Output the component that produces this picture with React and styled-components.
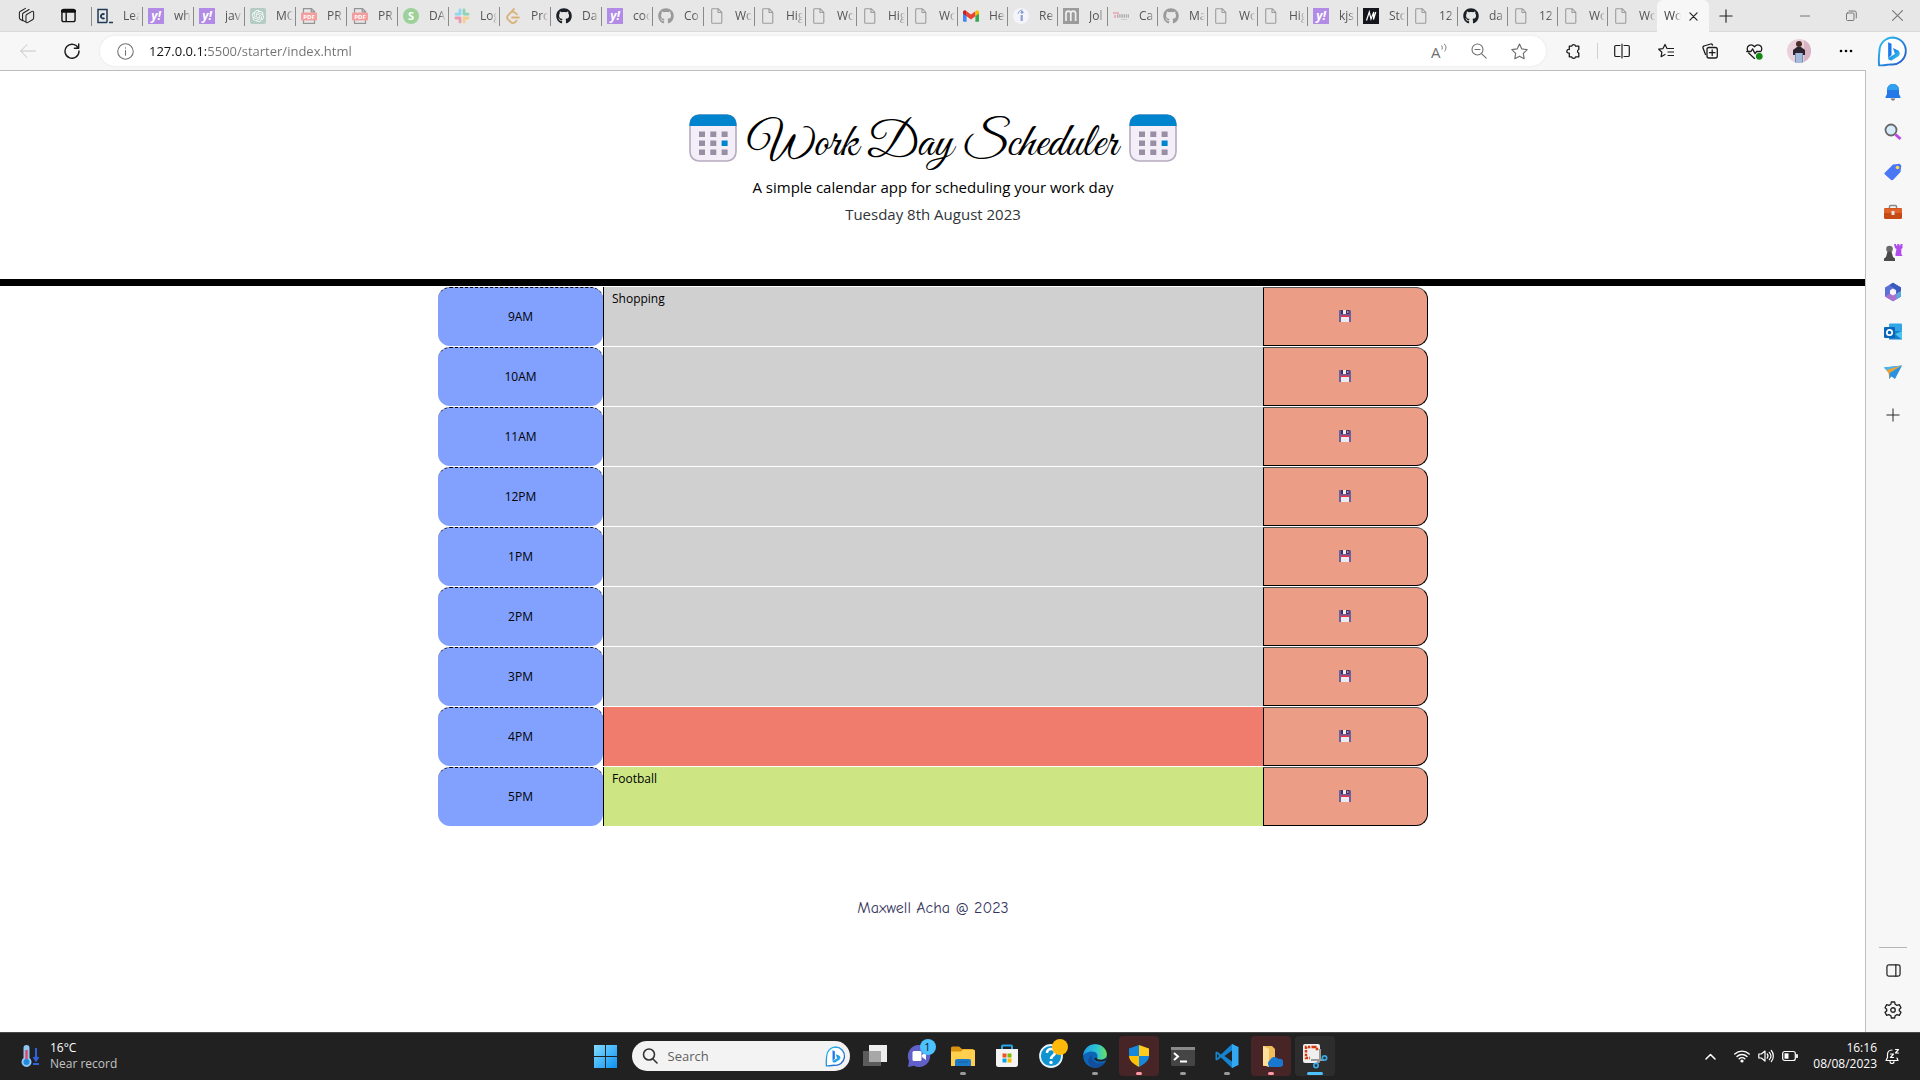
import React from "react";
import styled, { createGlobalStyle, css } from "styled-components";
import { FaGithub } from "react-icons/fa";
import { SiOpenai, SiLeetcode } from "react-icons/si";

const ui = `"Open Sans", "Noto Sans", sans-serif`;

const GlobalStyle = createGlobalStyle`
  * { box-sizing: border-box; }
  body { margin: 0; background: #fff; font-family: ${ui}; overflow: hidden; }
  button, input, textarea { font: inherit; color: inherit; margin: 0; }
  svg { display: block; flex: none; }
`;

const Screen = styled.div`
  display: flex;
  flex-direction: column;
  height: 100vh;
`;

const bare = css`
  display: flex;
  align-items: center;
  justify-content: center;
  border: 0;
  padding: 0;
  background: none;
`;

/* ---------- tab strip ---------- */

const TabStrip = styled.div`
  display: flex;
  align-items: stretch;
  height: 32px;
  flex: none;
  background: #e7e7e7;
  border-bottom: 1px solid #d9d9d9;
`;

const StripButton = styled.button`
  ${bare}
  width: ${(p) => p.$w || 42}px;
  color: ${(p) => p.$color || "#222"};
`;

const StripLead = styled.div`
  display: flex;
  padding-left: 5px;
  width: 91px;
`;

const Tab = styled.button`
  display: flex;
  align-items: center;
  gap: 10px;
  width: ${(p) => (p.$wide ? 51 : 50)}px;
  padding: 0 2px 0 6px;
  border: 0;
  background: linear-gradient(#8a8a8a, #8a8a8a) 0 7px / 1px 19px no-repeat;
  color: #555;
  font-size: 12px;
  line-height: 16px;
`;

const TabTitle = styled.span`
  flex: 1;
  min-width: 0;
  overflow: hidden;
  white-space: nowrap;
  text-align: left;
  mask-image: linear-gradient(90deg, #000 60%, transparent);
`;

const ActiveTab = styled.div`
  display: flex;
  align-items: center;
  gap: 4px;
  width: 52px;
  height: 32px;
  padding-left: 7px;
  border-radius: 6px 6px 0 0;
  background: #f7f7f7;
  color: #444;
  font-size: 12px;
  line-height: 16px;
`;

const ActiveTitle = styled(TabTitle)`
  flex: none;
  width: 17px;
`;

const WindowControls = styled.div`
  display: flex;
  margin-left: auto;
`;

const Square = styled.span`
  display: flex;
  flex: none;
  align-items: center;
  justify-content: center;
  width: 16px;
  height: 16px;
  border-radius: ${(p) => p.$r || 0}px;
  background: ${(p) => p.$bg};
  color: ${(p) => p.$fg || "#fff"};
  font-size: ${(p) => p.$fs || 11}px;
  line-height: 16px;
  font-weight: 700;
  font-style: ${(p) => (p.$it ? "italic" : "normal")};
`;

/* ---------- toolbar ---------- */

const Toolbar = styled.div`
  display: flex;
  align-items: center;
  height: 38px;
  flex: none;
  padding: 0 6px;
  background: #f7f7f7;
`;

const ToolButton = styled.button`
  ${bare}
  width: ${(p) => p.$w || 44}px;
  height: 32px;
  flex: none;
  color: ${(p) => p.$color || "#1b1b1b"};
`;

const AddressBar = styled.label`
  display: flex;
  flex: 1;
  align-items: center;
  height: 30px;
  margin: 0 5px 0 6px;
  padding: 0 7px 0 17px;
  border-radius: 15px;
  background: #fff;
  box-shadow: 0 0 3px #e4e4e4;
  color: #717171;
`;

const AddressInput = styled.input`
  flex: 1;
  min-width: 0;
  height: 24px;
  margin-left: 15px;
  padding: 0;
  border: 0;
  outline: 0;
  font-size: 13px;
  color: #6b6b6b;
  background: linear-gradient(90deg, #111 57px, #717171 57px);
  background-clip: text;
  -webkit-text-fill-color: transparent;
`;

const ToolDivider = styled.span`
  width: 1px;
  height: 16px;
  margin: 0 2px;
  background: #cfcfcf;
`;

/* ---------- body ---------- */

const Body = styled.div`
  display: flex;
  flex: 1;
  min-height: 0;
`;

const Page = styled.main`
  flex: 1;
  min-width: 0;
  border-top: 1px solid #bdbdbd;
  background: #fff;
`;

const Header = styled.header`
  display: flex;
  flex-direction: column;
  align-items: center;
  padding: 43px 0 53px;
  border-bottom: 7px solid #000;
  text-align: center;
`;

const Title = styled.h1`
  display: flex;
  align-items: flex-start;
  gap: 11px;
  margin: 0 0 1px;
  font-family: "Great Vibes", "Liberation Serif", cursive;
  font-weight: 400;
  font-size: 48px;
  line-height: 60px;
  color: #000;
`;

const Lead = styled.p`
  margin: 0;
  font-size: 15px;
  line-height: 24px;
  color: #000;
`;

const Today = styled.p`
  margin: 3px 0 0;
  font-size: 15px;
  line-height: 24px;
  color: #2f3437;
`;

const Planner = styled.div`
  width: 100%;
  max-width: 990px;
  margin: 0 auto;
`;

const slotColors = { past: "#d0d0d0", present: "#f07c6e", future: "#cde683" };

const Slot = styled.div`
  display: grid;
  grid-template-columns: 1fr 4fr 1fr;
  height: 59px;
  margin-top: 1px;
  font-size: 12px;
  color: #000;
`;

const Hour = styled.label`
  display: flex;
  align-items: center;
  justify-content: center;
  padding-bottom: 2px;
  border-top: 1px dashed #000;
  border-radius: 12px;
  background: #82a1ff;
`;

const Task = styled.textarea`
  display: block;
  width: 100%;
  height: 59px;
  padding: 3px 8px;
  border: 0;
  border-left: 1px solid #000;
  border-radius: 0;
  outline: 0;
  resize: none;
  line-height: 18px;
  background: ${(p) => slotColors[p.$when]};
`;

const Save = styled.button`
  ${bare}
  padding: 0 2px 2px 0;
  border: 1px solid #000;
  border-top-color: #555;
  border-radius: 0 12px 12px 0;
  background: #eb9d86;
`;

const Footer = styled.footer`
  padding-top: 70px;
  font-family: "Comic Sans MS", "Comic Neue", "Patrick Hand", Lato, ${ui};
  font-size: 16px;
  line-height: 24px;
  text-align: center;
  color: #35355c;
`;

/* ---------- sidebar ---------- */

const Sidebar = styled.aside`
  position: relative;
  display: flex;
  flex-direction: column;
  align-items: center;
  width: 54px;
  flex: none;
  padding: 2px 0;
  background: #f7f7f7;
  box-shadow: -1px 0 0 #bdbdbd;
`;

const SideButton = styled.button`
  ${bare}
  width: 40px;
  height: ${(p) => p.$h || 40}px;
  color: #222;
`;

const SideLine = styled.span`
  width: 28px;
  height: 1px;
  margin-top: auto;
  margin-bottom: 2px;
  background: #b5b5b5;
`;

/* ---------- taskbar ---------- */

const Taskbar = styled.nav`
  display: grid;
  grid-template-columns: 1fr auto 1fr;
  align-items: center;
  height: 48px;
  flex: none;
  padding-bottom: 1px;
  border-top: 1px solid #484848;
  background: #212121;
  color: #fff;
  font-size: 12px;
  line-height: 16px;
`;

const Weather = styled.button`
  ${bare}
  justify-self: start;
  gap: 8px;
  padding-left: 20px;
  text-align: left;
`;

const Muted = styled.span`
  color: #c4c4c4;
`;

const Stack = styled.span`
  display: flex;
  flex-direction: column;
`;

const Dock = styled.div`
  display: flex;
  align-items: center;
  gap: 4px;
`;

const SearchBox = styled.label`
  display: flex;
  align-items: center;
  width: 218px;
  height: 30px;
  margin: 0 1px 0 2px;
  padding: 0 4px 0 10px;
  border-radius: 15px;
  background: #f3f3f3;
  color: #333;
`;

const SearchInput = styled.input`
  flex: 1;
  min-width: 0;
  margin-left: 10px;
  padding: 0;
  border: 0;
  outline: 0;
  background: none;
  font-size: 13px;
  &::placeholder { color: #5f5f5f; opacity: 1; }
`;

const DockButton = styled.button`
  ${bare}
  position: relative;
  width: 40px;
  height: 40px;
  border-radius: 4px;
  background: ${(p) => p.$bg || "none"};
`;

const Running = styled.span`
  position: absolute;
  left: 50%;
  bottom: 1px;
  width: ${(p) => (p.$active ? 16 : 6)}px;
  height: 3px;
  border-radius: 2px;
  background: ${(p) => p.$color || "#9a9a9a"};
  transform: translateX(-50%);
`;

const Badge = styled.span`
  position: absolute;
  top: 3px;
  right: 3px;
  width: 16px;
  height: 16px;
  border-radius: 8px;
  background: ${(p) => p.$bg};
  color: #10202c;
  font-size: 11px;
  line-height: 16px;
`;

const Tray = styled.div`
  display: flex;
  align-items: center;
  justify-self: end;
  padding-right: 19px;
`;

const TrayButton = styled.button`
  ${bare}
  width: ${(p) => p.$w || 24}px;
  height: 40px;
`;

const Clock = styled.time`
  display: flex;
  flex-direction: column;
  width: 75px;
  margin-right: 6px;
  text-align: right;
`;

/* ---------- drawings ---------- */

const Line = ({ s = 16, v = 16, w = 1, children, ...rest }) => (
  <svg width={s} height={s} viewBox={`0 0 ${v} ${v}`} fill="none" stroke="currentColor" strokeWidth={w} strokeLinecap="round" strokeLinejoin="round" {...rest}>
    {children}
  </svg>
);

const PageIcon = () => (
  <Line s={16} w={1.1} color="#9c9c9c">
    <path d="M3.500.7h5.700l3.600 3.600v10.200a.8.8 0 0 1-.8.800H3.500a.8.800 0 0 1-.8-.8V1.500a.8.800 0 0 1 .8-.8zM9 .8v3.700h3.700" />
  </Line>
);

const YahooIcon = () => <Square $bg="#b18be6" $it $fs={12}>y!</Square>;

const PdfIcon = () => (
  <svg width="16" height="16" viewBox="0 0 16 16">
    <path d="M2.500 5V.6h8l3 3V5M2.500 12v3.400h11V12M10.200.6v3.200h3.200" fill="none" stroke="#949494" strokeWidth="1.200" />
    <rect x="0" y="4.500" width="16" height="8" rx="1" fill="#f49d9d" />
    <text x="8" y="11" fontSize="6" fontWeight="700" fill="#fff" textAnchor="middle" fontFamily="Open Sans, sans-serif">PDF</text>
  </svg>
);

const CodecademyIcon = () => (
  <svg width="16" height="16" viewBox="0 0 16 16" fill="none" stroke="#1f3b57" strokeWidth="1.500">
    <path d="M10 14.500H1V1.500h9v13M12 14.500h4" />
    <path d="M7.500 6.500a2.200 2.200 0 1 0 0 3.500" strokeWidth="1.800" />
  </svg>
);

const SlackIcon = () => (
  <svg width="16" height="16" viewBox="0 0 16 16" strokeWidth="2.800" strokeLinecap="round">
    <path d="M6 2v4.300M2 6.200h4" stroke="#8fd8ef" />
    <path d="M10 2v4M14 6.200h-3.800" stroke="#8ed3b6" />
    <path d="M10 14v-4M14 10h-4" stroke="#f2cf8d" />
    <path d="M6 14v-4M2 10h4" stroke="#ec9ab3" />
  </svg>
);

const GmailIcon = () => (
  <svg width="16" height="16" viewBox="0 0 16 16">
    <path d="M0 3.500v9.300c0 .6.500 1 1 1h2.600V7z" fill="#4285f4" />
    <path d="M16 3.500v9.300c0 .6-.5 1-1 1h-2.600V7z" fill="#34a853" />
    <path d="M3.600 3.200 8 6.500l4.400-3.300v5L8 11.500 3.600 8.200z" fill="#ea4335" />
    <path d="M0 4.200v1.300l3.600 2.700V3.200l-1-.7C1.500 1.600 0 2.600 0 4.200z" fill="#c5221f" />
    <path d="M16 4.200v1.300l-3.600 2.700V3.200l1-.7C14.500 1.600 16 2.600 16 4.200z" fill="#fbbc04" />
  </svg>
);

const IndeedIcon = () => (
  <svg width="16" height="16" viewBox="0 0 16 16">
    <circle cx="8" cy="8" r="8" fill="#f3f5fa" />
    <circle cx="9" cy="4.200" r="1.500" fill="#8ba0d4" />
    <path d="M8.700 7v6" stroke="#8ba0d4" strokeWidth="2.200" />
    <path d="M5 6c.5-2.500 2-4 4.500-4" stroke="#8ba0d4" fill="none" />
  </svg>
);

const MIcon = () => (
  <svg width="16" height="16" viewBox="0 0 16 16">
    <rect width="16" height="16" fill="#9b9b9b" />
    <path d="M3 13V5.500a2 2 0 0 1 4.800 0V13V5.500a2 2 0 0 1 4.800 0V13" fill="none" stroke="#eee" strokeWidth="1.700" />
  </svg>
);

const SportsIcon = () => (
  <svg width="16" height="16" viewBox="0 0 16 16">
    <path d="M0 5h6M2 7v3" stroke="#eaa3b2" strokeWidth="1.600" />
    <path d="M4 8h12" stroke="#b5b0b0" strokeWidth="3.500" strokeDasharray="1.500 .7" />
    <path d="M8 11.500h6" stroke="#ccc" />
  </svg>
);

const MediumIcon = () => (
  <svg width="16" height="16" viewBox="0 0 16 16">
    <rect width="16" height="16" fill="#15151d" />
    <path d="M3.500 12.500 6.300 4l1.700 7L10.800 4 10.500 11.500 12.800 4" fill="none" stroke="#fff" strokeWidth="1.200" />
  </svg>
);

const BingIcon = ({ s = 31 }) => (
  <svg width={s} height={s} viewBox="0 0 32 32">
    <defs>
      <linearGradient id="bingRing" x1="0" y1="0" x2="1" y2="1">
        <stop offset="0" stopColor="#2bc5f3" />
        <stop offset="1" stopColor="#2354c8" />
      </linearGradient>
      <linearGradient id="bingB" x1="0" y1="0" x2="1" y2="1">
        <stop offset="0" stopColor="#1565e0" />
        <stop offset="1" stopColor="#37d0ee" />
      </linearGradient>
    </defs>
    <path d="M16.500 1.500a14 14 0 1 1-3 27.800c-3 .3-7 1.400-11.300.9C1.500 25 2 20 2.500 15.500a14 14 0 0 1 14-14z" fill="#fff" stroke="url(#bingRing)" strokeWidth="2" />
    <path d="M11.500 6.500 15 8v11.500l-3.500 3.200z" fill="#1b78ee" />
    <path d="M16.500 12.500 22 15c2 1.200 2 4.500.2 6L15.500 25c-2 .9-4-.3-4-2.300l7-4z" fill="url(#bingB)" />
  </svg>
);

const CalendarIcon = () => (
  <svg width="48" height="48" viewBox="0 0 48 48" aria-hidden="true">
    <rect x="1" y="1" width="46" height="46" rx="9" fill="#f3eef8" stroke="#b6aabf" strokeWidth="1.600" />
    <path d="M.5 12V10A9.500 9.500 0 0 1 10 .5h28A9.500 9.500 0 0 1 47.500 10v2z" fill="#0084ce" />
    {[0, 1, 2].map((r) => [0, 1, 2].map((c) => (
      <rect key={`${r}${c}`} x={10 + c * 11.300} y={17.500 + r * 9} width="6" height="5.500" fill={r === 1 && c === 2 ? "#0084ce" : "#998ea4"} />
    )))}
  </svg>
);

const FloppyIcon = () => (
  <svg width="12" height="12" viewBox="0 0 12 12" aria-hidden="true">
    <path d="M.5 0h10.500l1 1v10.500a.5.5 0 0 1-.5.500H.5a.5.500 0 0 1-.5-.5V.5a.5.500 0 0 1 .5-.5z" fill="#6f5f9c" />
    <path d="M2 0h8.500v4H2z" fill="#46305f" />
    <path d="M4 0h3v4H4z" fill="#eee" />
    <path d="M8 1h1.500v2H8z" fill="#a99cb8" />
    <path d="M2 6h8v6H2z" fill="#eceaf0" />
    <path d="M2 5.500h8V7H2z" fill="#f0313c" />
  </svg>
);

const gh = (c) => <FaGithub size={16} color={c} />;

const tabs = [
  [<CodecademyIcon />, "Lea"], [<YahooIcon />, "wh"], [<YahooIcon />, "jav"],
  [<Square $bg="#b4ccc4" $r={2}><SiOpenai size={12} /></Square>, "MO"],
  [<PdfIcon />, "PR"], [<PdfIcon />, "PR"],
  [<Square $bg="#9dd19a" $r={8}>S</Square>, "DA"],
  [<SlackIcon />, "Log"], [<SiLeetcode size={16} color="#d9b27a" />, "Pro"],
  [gh("#1b2026"), "Da"], [<YahooIcon />, "coc"], [gh("#9a9a9a"), "Co"],
  [<PageIcon />, "Wo"], [<PageIcon />, "Hig"], [<PageIcon />, "Wo"], [<PageIcon />, "Hig"], [<PageIcon />, "Wo"],
  [<GmailIcon />, "He"], [<IndeedIcon />, "Re"], [<MIcon />, "Jol"], [<SportsIcon />, "Ca"],
  [gh("#9a9a9a"), "Ma"], [<PageIcon />, "Wo"], [<PageIcon />, "Hig"], [<YahooIcon />, "kjs"],
  [<MediumIcon />, "Sto"], [<PageIcon />, "12"], [gh("#1b2026"), "da"], [<PageIcon />, "12"],
  [<PageIcon />, "Wo"], [<PageIcon />, "Wo"],
];

const slots = [
  ["9AM", "past", "Shopping"], ["10AM", "past", ""], ["11AM", "past", ""],
  ["12PM", "past", ""], ["1PM", "past", ""], ["2PM", "past", ""],
  ["3PM", "past", ""], ["4PM", "present", ""], ["5PM", "future", "Football"],
];

const sideItems = [
  ["Notifications", <svg width="20" height="20" viewBox="0 0 20 20"><path d="M10 2c4 0 6 3 6 6.500V12l1.500 3v1h-15v-1L4 12V8.500C4 5 6 2 10 2z" fill="#2478e8" /><path d="M10 2c4 0 6 3 6 6H4c0-3 2-6 6-6z" fill="#31a0ef" /><path d="M7.500 16.500h5L11 18.500H9z" fill="#777" /></svg>],
  ["Search", <svg width="20" height="20" viewBox="0 0 20 20"><path d="m12.500 12.500 5 4.500" stroke="#c044ee" strokeWidth="3" /><circle cx="8" cy="8" r="5.500" fill="#d6ecfb" stroke="#686868" strokeWidth="1.800" /></svg>],
  ["Shopping", <svg width="20" height="20" viewBox="0 0 20 20"><path d="m2 10.500 8-8 6.500-.8 1.800 1.800-.8 6.500-7 7.500c-1 1-2 1-3 0l-5.500-5c-.7-.7-.7-1.300 0-2z" fill="#4a78f5" /><circle cx="14.500" cy="5.500" r="1.800" fill="#ffd84a" /></svg>],
  ["Tools", <svg width="20" height="20" viewBox="0 0 20 20"><path d="M6.500 6V4.500a1 1 0 0 1 1-1h5a1 1 0 0 1 1 1V6" fill="none" stroke="#888" strokeWidth="1.500" /><rect x="1" y="6" width="18" height="11" rx="1.500" fill="#c54a15" /><path d="M1 6.500h18V11H1z" fill="#e0622a" /><rect x="8.500" y="9" width="3" height="4" fill="#e4e4e4" /></svg>],
  ["Games", <svg width="20" height="20" viewBox="0 0 20 20"><path d="M11 2h2v1.500h1.300V2h2v1.500h1.200V2h2v4l-1.200 1v5l1.200 2h-7V12l1-5-1.500-1z" fill="#b04bf0" /><circle cx="6.500" cy="7" r="3.300" fill="#6a6a6a" /><path d="M4.500 9.500h4L10 15l2 1.500V19H1v-2.500L3 15z" fill="#4a4a4a" /></svg>],
  ["Microsoft 365", <svg width="20" height="20" viewBox="0 0 20 20"><path d="M10 .8 18 5.400v9.200L10 19.200 2 14.600V5.400z" fill="#5b6fd6" /><path d="M10 .8 18 5.400v5.200l-4.500 2.600V8L6.500 3z" fill="#3a5bbd" /><path d="M2 14.600 7 11.500l3 2 8-4.500v5.600l-8 4.600z" fill="#a873cf" /><path d="m18 9-4.500 2.700v5.500l4.500-2.600z" fill="#54abdf" /><path d="m10 6.500 3 1.700v3.600l-3 1.700-3-1.700V8.200z" fill="#f7f7f7" /></svg>],
  ["Outlook", <svg width="20" height="20" viewBox="0 0 20 20"><rect x="6" y="1.500" width="13" height="10" rx="1" fill="#30a5e8" /><path d="M6 9h13v8.500H6z" fill="#1581cf" /><path d="m12 12 7-3v8.500z" fill="#4bc3ef" /><rect x="1" y="5" width="11" height="11" rx="1" fill="#0a66b8" /><circle cx="6.500" cy="10.500" r="2.700" fill="none" stroke="#fff" strokeWidth="1.700" /></svg>],
  ["Drop", <svg width="20" height="20" viewBox="0 0 20 20"><path d="M1 5.500 19 3.500 12 17l-3.500-2.500L6 17v-6z" fill="#2c8fe0" /><path d="M1 5.500 19 3.500 6.500 11z" fill="#47b2ee" /><path d="m3.500 8 15-4.500L6.500 11v6l-1-6z" fill="#efa22e" /></svg>],
  ["Add", <Line s={14} w={1.1}><path d="M8 1v14M1 8h14" /></Line>, 46],
];

const dockItems = [
  { n: "Task view", i: <svg width="24" height="24" viewBox="0 0 24 24"><rect x="6" y="1" width="18" height="17" fill="#eee" /><rect x="0" y="7" width="18" height="15" fill="#5c5c5c" /><rect x="6" y="7" width="12" height="11" fill="#a8a8a8" /></svg> },
  { n: "Chat", badge: "#4cc2ff", count: "1", i: <svg width="24" height="24" viewBox="0 0 24 24"><path d="M12 1a11 11 0 1 1-5 20.700L1 23l1-6A11 11 0 0 1 12 1z" fill="#6160c9" /><rect x="5.500" y="7" width="9" height="10" rx="1.500" fill="#fff" /><path d="m15 11 4-3v8l-4-3z" fill="#fff" /></svg> },
  { n: "File Explorer", run: 1, i: <svg width="24" height="24" viewBox="0 0 24 24"><path d="M0 4a1.500 1.500 0 0 1 1.500-1.500H8L11 5h11v6H0z" fill="#d9930e" /><path d="M0 7.500h10L12 5.500h10.500A1.500 1.500 0 0 1 24 7v15H0z" fill="#ffcf4d" /><path d="M4 22v-5a2 2 0 0 1 2-2h12a2 2 0 0 1 2 2v5z" fill="#1a7ac9" /><path d="M7 18h10" stroke="#1260a2" /></svg> },
  { n: "Store", i: <svg width="24" height="24" viewBox="0 0 24 24"><path d="M7 6V2.500a1 1 0 0 1 1-1h8a1 1 0 0 1 1 1V6" fill="none" stroke="#27a8ec" strokeWidth="2" /><path d="M1 5h22v15.500a2.500 2.500 0 0 1-2.500 2.500h-17A2.500 2.500 0 0 1 1 20.500z" fill="#f4f4f4" /><path d="M7.500 9.500h4v4h-4z" fill="#f25022" /><path d="M12.500 9.500h4v4h-4z" fill="#7fba00" /><path d="M7.500 14.500h4v4h-4z" fill="#00a4ef" /><path d="M12.500 14.500h4v4h-4z" fill="#ffb900" /></svg> },
  { n: "Get Help", badge: "#ffb90a", i: <svg width="24" height="24" viewBox="0 0 24 24"><circle cx="12" cy="12" r="11" fill="#0f93d0" stroke="#e7f4fa" strokeWidth="1.800" /><path d="M8 9c0-5.500 8-5 8-.5 0 3-4 3-4 6.500" fill="none" stroke="#fff" strokeWidth="2.600" /><circle cx="12" cy="18.500" r="1.700" fill="#fff" /></svg> },
  { n: "Edge", run: 1, i: <svg width="24" height="24" viewBox="0 0 24 24"><defs><linearGradient id="edgeTop"><stop offset="0" stopColor="#1f9de4" /><stop offset=".6" stopColor="#2fc6d0" /><stop offset="1" stopColor="#6ee05a" /></linearGradient></defs><circle cx="12" cy="12" r="11.800" fill="#0d65b8" /><path d="M.2 11.500C1 4.500 6 .2 12 .2c7 0 12 5 11.800 10.300-.2 4-3.500 5.500-6.500 5.300-3 0-3.800-1-3-2C15.500 10.500 13 7.500 9 7.500c-4 0-7.500 2-8.800 4z" fill="url(#edgeTop)" /><path d="M9.500 11c-2 5 2 10.500 12.500 7.500-3 5-9 6.300-13 4.500-5-3-5-10 .5-12z" fill="#124e9c" /><path d="M14.300 13.800c-.8 1 0 2 3 2 2 .1 4-.5 5.300-2l.5 2.200c-5 2.500-11 2-12-2z" fill="#212121" /></svg> },
  { n: "Security", run: 1, c: "#ff99a4", bg: "#472526", i: <svg width="24" height="24" viewBox="0 0 24 24"><path d="M12 1 2 4.500V12h10z" fill="#1588dd" /><path d="m12 1 10 3.500V12H12z" fill="#ffcb1f" /><path d="M2 12h10v11C6 20 2 16 2 12z" fill="#ffc107" /><path d="M22 12H12v11c6-3 10-7 10-11z" fill="#1588dd" /></svg> },
  { n: "Terminal", run: 1, i: <svg width="24" height="24" viewBox="0 0 24 24"><rect y="3" width="24" height="19" rx="1.500" fill="#454545" /><path d="M0 3h24v3H0z" fill="#8a8a8a" /><path d="m3 9 4 3.500L3 16M9 17.500h7" fill="none" stroke="#fff" strokeWidth="2" /></svg> },
  { n: "VS Code", run: 1, i: <svg width="24" height="24" viewBox="0 0 24 24"><path d="M17 0 6 10.500 2 7.500.5 8.300v7.400l1.500.8 4-3L17 24l2-1V1z" fill="#1583cf" /><path d="M17 6.500 9.500 12l7.500 5.500zM2 9.800 4.200 12 2 14.200z" fill="#212121" /><path d="m17 0 6.500 3v18L17 24z" fill="#32a9f2" /></svg> },
  { n: "OneDrive folder", run: 1, c: "#ff99a4", bg: "#472526", i: <svg width="24" height="24" viewBox="0 0 24 24"><path d="M4 2h9l3 3v17H4z" fill="#f0bd5c" /><path d="M4 2l6 3v18l-6-2z" fill="#ffe09a" /><path d="M11 23a4 4 0 0 1 0-7 5 5 0 0 1 8.500-1 4 4 0 0 1 2 8z" fill="#1877cf" /></svg> },
  { n: "Snipping Tool", run: 1, active: true, c: "#4cc2ff", bg: "#2d2d2d", i: <svg width="26" height="26" viewBox="0 0 26 26"><rect x="1" y="1" width="17" height="19" rx="2" fill="#efefef" /><path d="M12 4H4v11h4M12 4h3v4" fill="none" stroke="#d1390f" strokeWidth="2.500" strokeDasharray="2.500 1.200" /><path d="M18 6v11h-9M18 17l-3 3M18 17h4" fill="none" stroke="#999" strokeWidth="2" /><circle cx="14" cy="22.500" r="2.200" fill="none" stroke="#39a9e6" strokeWidth="1.700" /><circle cx="22.500" cy="15" r="2.200" fill="none" stroke="#39a9e6" strokeWidth="1.700" /></svg> },
];

function BrowserTabs() {
  return (
    <TabStrip>
      <StripLead>
        <StripButton aria-label="Workspaces">
          <Line s={17}>
            <path d="M4.500 13 2 11.500a1.500 1.500 0 0 1-.7-1.300V5.500A1.500 1.500 0 0 1 2 4.300l5-3M7 14l-2-1.200a1.500 1.500 0 0 1-.7-1.300V7A1.500 1.500 0 0 1 5 5.700l5.500-3.400M7.500 8.200v5.600a1 1 0 0 0 1.500.9l5-3a1.500 1.500 0 0 0 .7-1.300V5a1 1 0 0 0-1.500-.9l-5 3a1.500 1.500 0 0 0-.7 1.100z" />
          </Line>
        </StripButton>
        <StripButton aria-label="Tab actions">
          <Line s={15} w={1.5} color="#111">
            <rect x="1" y="1.500" width="14" height="13" rx="2" />
            <path d="M1.500 3.300h13" strokeWidth="3.500" />
            <path d="M5.500 5v9" />
          </Line>
        </StripButton>
      </StripLead>
      {tabs.map(([icon, title], i) => (
        <Tab key={i} $wide={i < 16}>
          {icon}
          <TabTitle>{title}</TabTitle>
        </Tab>
      ))}
      <ActiveTab>
        <ActiveTitle>Wo</ActiveTitle>
        <StripButton $w={16} aria-label="Close tab">
          <Line s={9} v={10} w={1.3}><path d="m1 1 8 8M9 1 1 9" /></Line>
        </StripButton>
      </ActiveTab>
      <StripButton $w={34} aria-label="New tab">
        <Line s={14} w={1.3}><path d="M8 1v14M1 8h14" /></Line>
      </StripButton>
      <WindowControls>
        <StripButton $w={46} $color="#777" aria-label="Minimise"><Line s={10} v={10}><path d="M0 5h10" /></Line></StripButton>
        <StripButton $w={46} $color="#777" aria-label="Restore">
          <Line s={11} v={11}><rect x=".5" y="3" width="7.500" height="7.500" rx="1" /><path d="M3 1h5a2 2 0 0 1 2.300 2v5" /></Line>
        </StripButton>
        <StripButton $w={46} $color="#777" aria-label="Close"><Line s={11} v={10}><path d="m.5.5 9 9M9.500.5l-9 9" /></Line></StripButton>
      </WindowControls>
    </TabStrip>
  );
}

function BrowserToolbar() {
  return (
    <Toolbar>
      <ToolButton aria-label="Back" $color="#c6c6c6"><Line><path d="M15.500 8H.8M7 1.500.7 8 7 14.500" /></Line></ToolButton>
      <ToolButton aria-label="Refresh"><Line w={1.4}><path d="M14.300 5.200A7 7 0 1 0 15 8M14.700 1v4.300h-4.300" /></Line></ToolButton>
      <AddressBar>
        <Line s={17} w={1}><circle cx="8" cy="8" r="7.300" /><path d="M8 7v4.500M8 4.500v.3" /></Line>
        <AddressInput aria-label="Address" defaultValue="127.0.0.1:5500/starter/index.html" />
        <ToolButton $w={40} $color="#6f6f6f" aria-label="Read aloud">
          <svg width="17" height="17" viewBox="0 0 17 17"><text x="0" y="15" fontSize="15" fontFamily="Open Sans, sans-serif" fill="currentColor">A</text><path d="M10.500 2.500c1 1 1 3 .3 4M13 .8c2.500 2 2.500 5.200.5 7.500" fill="none" stroke="currentColor" /></svg>
        </ToolButton>
        <ToolButton $w={40} $color="#6f6f6f" aria-label="Zoom out"><Line w={1.1}><circle cx="6.500" cy="6.500" r="5.500" /><path d="m10.800 10.800 4.400 4.400M4 6.500h5" /></Line></ToolButton>
        <ToolButton $w={40} $color="#6f6f6f" aria-label="Favourite"><Line s={17} w={1.1}><path d="m8 1 2.200 4.600 5 .7-3.600 3.500.8 5L8 12.400l-4.400 2.400.8-5L.8 6.300l5-.7z" /></Line></ToolButton>
      </AddressBar>
      <ToolButton aria-label="Extensions"><Line w={1.3}><path d="M4.300 3.200h2.400a2 2 0 0 1 3.900 0h3.200V6.500a1.900 1.900 0 0 0 0 3.600v3.700h-3.200a2 2 0 0 1-3.900 0H4.300v-3.700a1.900 1.900 0 1 1 0-3.600z" /></Line></ToolButton>
      <ToolDivider />
      <ToolButton aria-label="Split screen"><Line w={1.2}><path d="M6 2.500H2a1.300 1.300 0 0 0-1.300 1.300v8.400A1.300 1.300 0 0 0 2 13.500h4M10 2.500h4a1.300 1.300 0 0 1 1.300 1.300v8.400a1.300 1.300 0 0 1-1.300 1.300h-4M8 1v14" /></Line></ToolButton>
      <ToolButton aria-label="Favourites"><Line w={1.2}><path d="M9 5.500 7 1.500 5 5.600l-4.300.6 3.200 3-.8 4.500L7 11.500M10 5.500h5.500M10 9h5.500M10 12.500h5.500" /></Line></ToolButton>
      <ToolButton aria-label="Collections"><Line w={1.3}><path d="M3.500 11.500 1 5a1.500 1.500 0 0 1 1-2l6.500-2A1.500 1.500 0 0 1 10.500 2" /><rect x="5" y="4.500" width="10.300" height="10.500" rx="2" /><path d="M10.200 7v5.500M7.500 9.700h5.500" /></Line></ToolButton>
      <ToolButton aria-label="Browser essentials"><Line s={17} w={1.2}><path d="M1.500 7C0 2.500 5 0 8 3.500 11 0 16 2.500 14.500 7M.7 8h4l1.500-2.500L8.500 10 10 8h4M2.500 9.500 8 14.500" /><circle cx="12.500" cy="12.500" r="2.600" fill="#138a13" stroke="#138a13" /></Line></ToolButton>
      <ToolButton aria-label="Profile" $w={46}>
        <svg width="24" height="24" viewBox="0 0 24 24"><defs><clipPath id="face"><circle cx="12" cy="12" r="12" /></clipPath></defs><g clipPath="url(#face)"><path d="M0 0h24v24H0z" fill="#ead0da" /><path d="M17 0h7v24h-7z" fill="#d9b4c4" /><circle cx="12" cy="5" r="3" fill="#4c2e2a" /><path d="M6 11l4-3h4l4 3v5H6z" fill="#2b2430" /><path d="M8 14h8v10H8z" fill="#6b8fc0" /><path d="M10 14v10M12 14v10M14 14v10" stroke="#dfe8f5" /></g></svg>
      </ToolButton>
      <ToolButton aria-label="Settings and more" $w={48}><svg width="14" height="4" viewBox="0 0 14 4"><circle cx="2" cy="2" r="1.300" /><circle cx="7" cy="2" r="1.300" /><circle cx="12" cy="2" r="1.300" /></svg></ToolButton>
      <ToolButton aria-label="Bing"><BingIcon /></ToolButton>
    </Toolbar>
  );
}

function Scheduler() {
  return (
    <Page>
      <Header>
        <Title><CalendarIcon /><span>Work Day Scheduler</span><CalendarIcon /></Title>
        <Lead>A simple calendar app for scheduling your work day</Lead>
        <Today>Tuesday 8th August 2023</Today>
      </Header>
      <Planner>
        {slots.map(([hour, when, task]) => (
          <Slot key={hour}>
            <Hour htmlFor={`task-${hour}`}>{hour}</Hour>
            <Task id={`task-${hour}`} $when={when} defaultValue={task} spellCheck={false} />
            <Save aria-label={`Save ${hour}`}><FloppyIcon /></Save>
          </Slot>
        ))}
      </Planner>
      <Footer>Maxwell Acha @ 2023</Footer>
    </Page>
  );
}

function EdgeSidebar() {
  return (
    <Sidebar>
      {sideItems.map(([name, icon, h]) => <SideButton key={name} aria-label={name} $h={h}>{icon}</SideButton>)}
      <SideLine />
      <SideButton aria-label="Hide sidebar"><Line s={15} w={1.3}><rect x="1" y="2" width="14" height="12" rx="2" /><path d="M10.500 2v12" /></Line></SideButton>
      <SideButton aria-label="Settings"><Line s={18} w={1.2}><path d="m6.500.9-.4 2-1.700 1-2-.7L.9 6l1.500 1.300v1.500L.9 10l1.500 2.800 2-.7 1.700 1 .4 2h3l.4-2 1.700-1 2 .7 1.500-2.800-1.500-1.300V7.300L15.100 6l-1.500-2.800-2 .7-1.700-1-.4-2z" /><circle cx="8" cy="8" r="2" /></Line></SideButton>
    </Sidebar>
  );
}

function WindowsTaskbar() {
  return (
    <Taskbar>
      <Weather>
        <svg width="22" height="24" viewBox="0 0 22 24"><path d="M3.500 4a3 3 0 0 1 6 0v10a5 5 0 1 1-6 0z" fill="#8fc8f5" /><path d="M6.500 6v11" stroke="#e2455f" strokeWidth="2.400" /><circle cx="6.500" cy="18" r="3" fill="#1e8ae0" /><path d="M16 4v12M13.500 13l2.500 3.500 2.500-3.500M13 20h6" fill="none" stroke="#2f62e0" strokeWidth="2" /></svg>
        <Stack><span>16°C</span><Muted>Near record</Muted></Stack>
      </Weather>
      <Dock>
        <DockButton aria-label="Start">
          <svg width="23" height="23" viewBox="0 0 23 23"><defs><linearGradient id="win" x1="0" y1="0" x2="1" y2="1"><stop offset="0" stopColor="#82dcff" /><stop offset="1" stopColor="#0a92f5" /></linearGradient></defs><path d="M0 0h11v11H0zM12 0h11v11H12zM0 12h11v11H0zM12 12h11v11H12z" fill="url(#win)" /></svg>
        </DockButton>
        <SearchBox>
          <Line s={16} w={1.6}><circle cx="7" cy="6.500" r="5.500" /><path d="m11 11 4 4" /></Line>
          <SearchInput aria-label="Search" placeholder="Search" />
          <BingIcon s={21} />
        </SearchBox>
        {dockItems.map((d) => (
          <DockButton key={d.n} aria-label={d.n} $bg={d.bg}>
            {d.i}
            {d.badge && <Badge $bg={d.badge}>{d.count}</Badge>}
            {d.run && <Running $color={d.c} $active={d.active} />}
          </DockButton>
        ))}
      </Dock>
      <Tray>
        <TrayButton $w={40} aria-label="Hidden icons"><Line s={11} v={11} w={1.5}><path d="m1 8 4.500-4.500L10 8" /></Line></TrayButton>
        <TrayButton aria-label="Wi-Fi"><Line w={1.4}><path d="M.8 6a10.500 10.500 0 0 1 14.400 0M3 8.500a7.200 7.200 0 0 1 10 0M5.200 10.800a4 4 0 0 1 5.600 0" /><circle cx="8" cy="13" r=".9" fill="currentColor" /></Line></TrayButton>
        <TrayButton aria-label="Volume"><Line w={1.2}><path d="M.8 6v4h2.500L7 13V3L3.300 6zM9.200 6c1 1.200 1 2.800 0 4M11.300 4.300c2 2.200 2 5.200 0 7.400M13.300 2.500c2.700 3 2.700 8 0 11" /></Line></TrayButton>
        <TrayButton aria-label="Battery"><Line w={1.2}><rect x=".7" y="3.500" width="12.600" height="9" rx="2" /><path d="M15 6.800v2.400" strokeWidth="1.800" /><path d="M2.500 5.300h4v5.400h-4z" fill="currentColor" stroke="none" /></Line></TrayButton>
        <Clock><span>16:16</span><span>08/08/2023</span></Clock>
        <TrayButton $w={18} aria-label="Notifications"><Line w={1.2}><path d="M8 2C5 2 3.500 4 3.500 6.500v3L2 12.500h12l-1-2.500M6 13.500a2 2 0 0 0 4 0M6.500 6h3l-3 3.500h3M11.500 1.500h3l-3 3.500h3" /></Line></TrayButton>
      </Tray>
    </Taskbar>
  );
}

export default function App() {
  return (
    <>
      <GlobalStyle />
      <Screen>
        <BrowserTabs />
        <BrowserToolbar />
        <Body>
          <Scheduler />
          <EdgeSidebar />
        </Body>
        <WindowsTaskbar />
      </Screen>
    </>
  );
}
